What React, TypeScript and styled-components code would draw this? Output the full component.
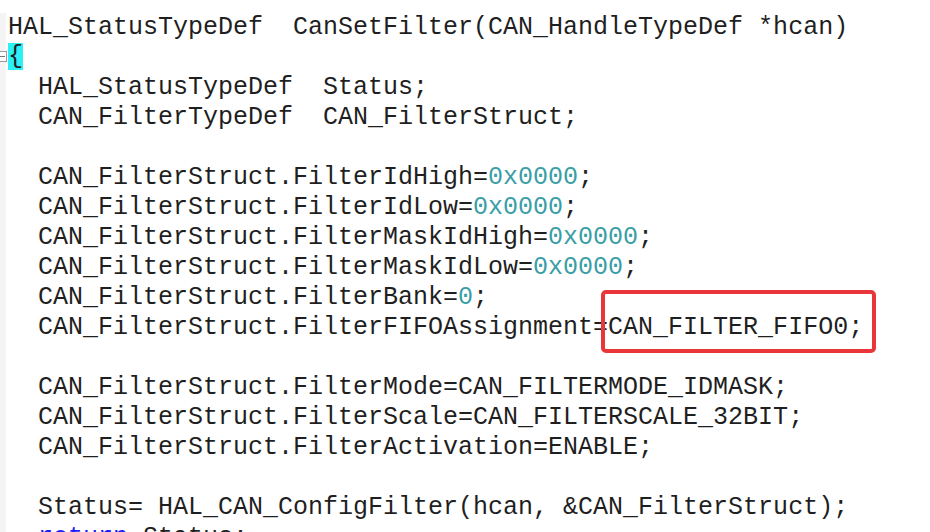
import React from "react";
import styled, { createGlobalStyle } from "styled-components";

const Global = createGlobalStyle`
  html, body { margin: 0; padding: 0; background: #ffffff; overflow: hidden; }
`;

const Editor = styled.div`
  position: relative;
  width: 930px;
  height: 532px;
  overflow: hidden;
  background: #ffffff;
  padding-top: 13px;
  box-sizing: border-box;
  font-family: "Liberation Mono", "DejaVu Sans Mono", monospace;
  font-size: 25px;
  color: #1f1f1f;
`;

const Row = styled.div`
  display: flex;
  height: 30px;
  line-height: 30px;
  white-space: pre;
`;

const Gutter = styled.div`
  width: 6px;
  margin-right: 2px;
  flex-shrink: 0;
  background: #f4f4f4;
  display: flex;
  align-items: center;
  position: relative;
`;

const FoldBox = styled.div`
  width: 9px;
  height: 11px;
  margin-left: -2px;
  margin-top: -4px;
  border: 1px solid #9a9a9a;
  background: #ffffff;
  box-sizing: border-box;
  display: flex;
  align-items: center;
  justify-content: center;
  flex-shrink: 0;
  &::after {
    content: "";
    width: 5px;
    height: 1px;
    background: #777;
  }
`;

const Code = styled.div`
  display: flex;
  align-items: center;
`;

const Num = styled.span`
  color: #3a9ea6;
`;

const Kw = styled.span`
  color: #1a1aff;
`;

const Brace = styled.span`
  display: inline-block;
  background: #2df0f6;
  height: 27px;
  line-height: 27px;
  margin-top: -3px;
`;

const Highlight = styled.div`
  position: absolute;
  left: 601px;
  top: 290px;
  width: 275px;
  height: 63px;
  border: 4px solid #e8363b;
  border-radius: 5px;
  box-sizing: border-box;
  pointer-events: none;
`;

type Seg = string | { n: string } | { k: string };

const lines: Seg[][] = [
  ["HAL_StatusTypeDef  CanSetFilter(CAN_HandleTypeDef *hcan)"],
  [],
  ["  HAL_StatusTypeDef  Status;"],
  ["  CAN_FilterTypeDef  CAN_FilterStruct;"],
  [""],
  ["  CAN_FilterStruct.FilterIdHigh=", { n: "0x0000" }, ";"],
  ["  CAN_FilterStruct.FilterIdLow=", { n: "0x0000" }, ";"],
  ["  CAN_FilterStruct.FilterMaskIdHigh=", { n: "0x0000" }, ";"],
  ["  CAN_FilterStruct.FilterMaskIdLow=", { n: "0x0000" }, ";"],
  ["  CAN_FilterStruct.FilterBank=", { n: "0" }, ";"],
  ["  CAN_FilterStruct.FilterFIFOAssignment=CAN_FILTER_FIFO0;"],
  [""],
  ["  CAN_FilterStruct.FilterMode=CAN_FILTERMODE_IDMASK;"],
  ["  CAN_FilterStruct.FilterScale=CAN_FILTERSCALE_32BIT;"],
  ["  CAN_FilterStruct.FilterActivation=ENABLE;"],
  [""],
  ["  Status= HAL_CAN_ConfigFilter(hcan, &CAN_FilterStruct);"],
  ["  ", { k: "return" }, " Status;"],
];

function renderSeg(s: Seg, i: number) {
  if (typeof s === "string") return <span key={i}>{s}</span>;
  if ("n" in s) return <Num key={i}>{s.n}</Num>;
  return <Kw key={i}>{s.k}</Kw>;
}

export default function App() {
  return (
    <>
      <Global />
      <Editor>
        {lines.map((segs, idx) => (
          <Row key={idx}>
            <Gutter>{idx === 1 && <FoldBox />}</Gutter>
            <Code>
              {idx === 1 ? <Brace>{"{"}</Brace> : segs.map(renderSeg)}
            </Code>
          </Row>
        ))}
        <Highlight />
      </Editor>
    </>
  );
}
